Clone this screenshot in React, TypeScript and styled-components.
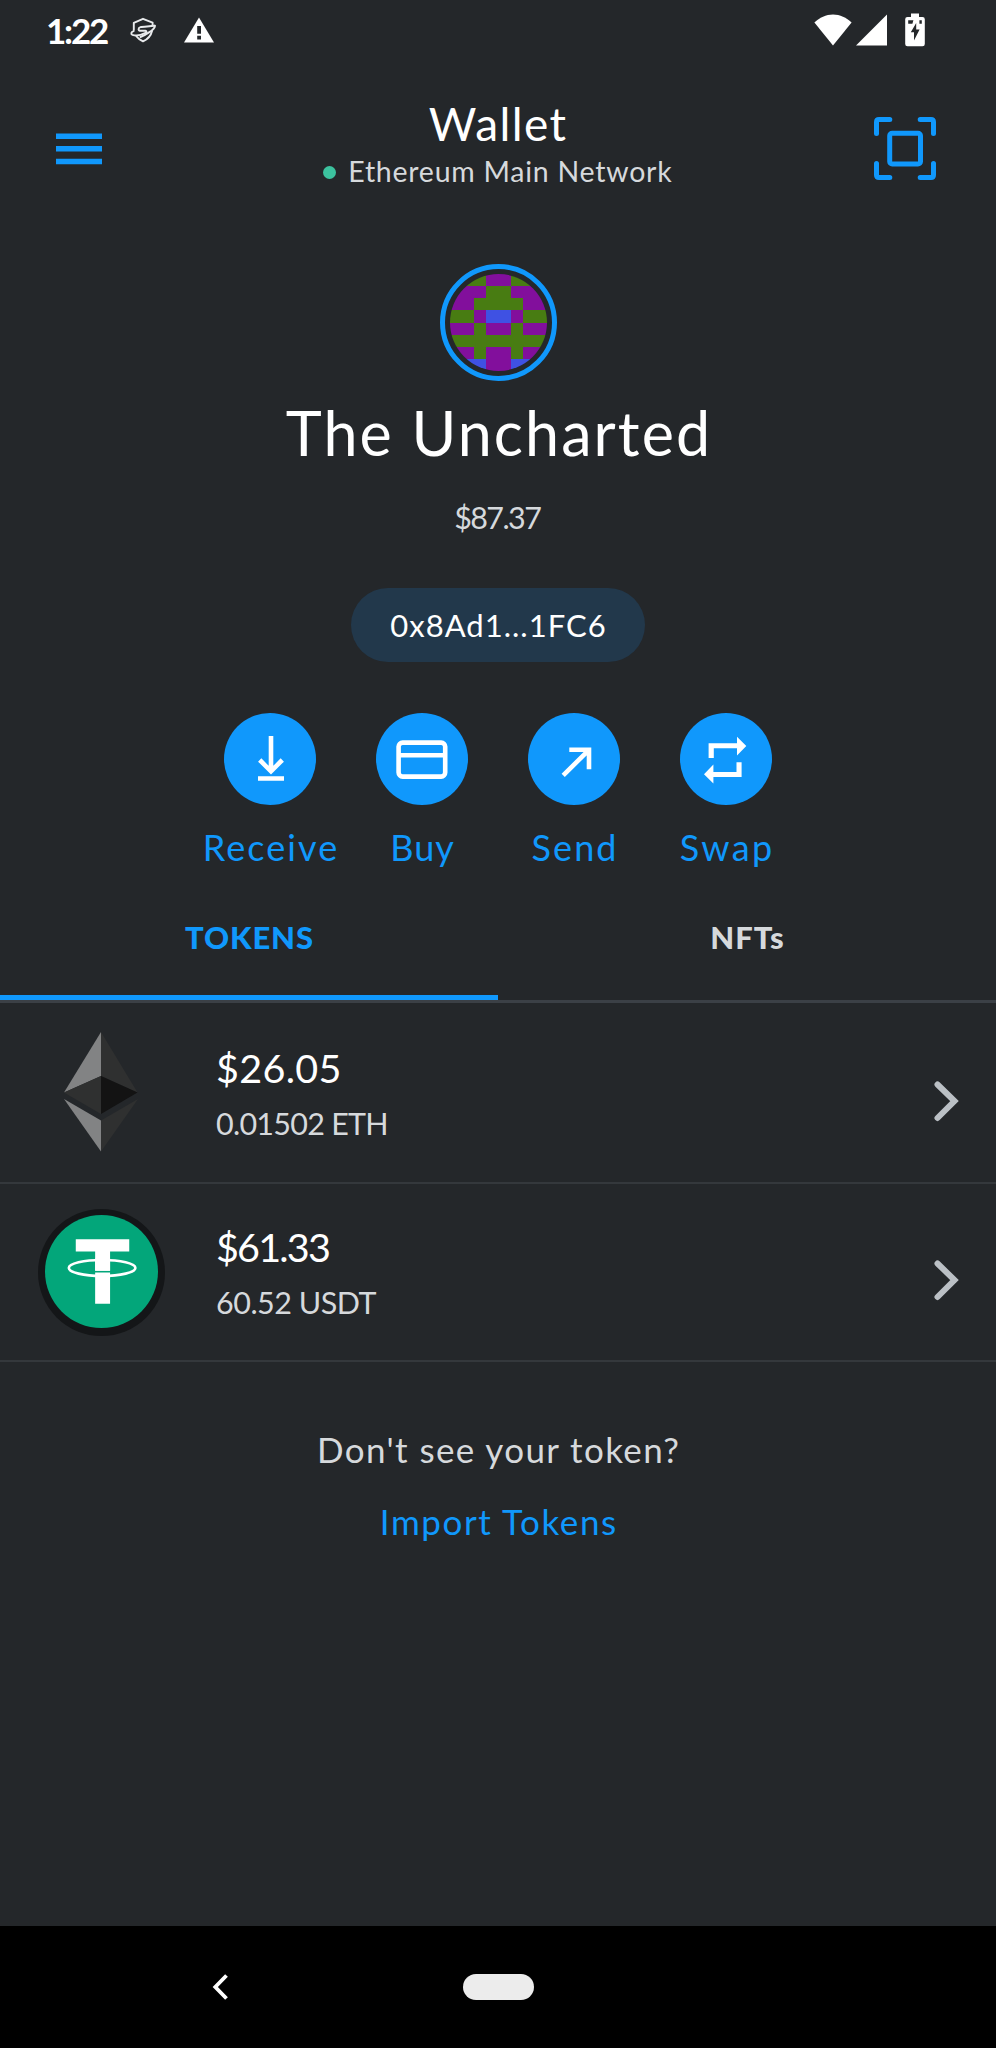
import React from 'react';
import styled, { createGlobalStyle, css } from 'styled-components';

const color = {
  bg: '#24272a',
  blue: '#1098fc',
  text: '#ffffff',
  muted: '#d6d9dc',
  line: '#3b4046',
  rowLine: '#34383c',
};

const GlobalStyle = createGlobalStyle`
  *, *::before, *::after { box-sizing: border-box; }
  body {
    margin: 0;
    background: ${color.bg};
    color: ${color.text};
    font-family: Lato, "Liberation Sans", sans-serif;
  }
  button { border: 0; padding: 0; background: none; color: inherit; font: inherit; }
  svg { display: block; flex: none; }
`;

/* Trailing tracking is pulled back so that centred lines stay centred. */
const type = (size: number, line: number, tracking = 0) => css`
  font-size: ${size}px;
  line-height: ${line}px;
  letter-spacing: ${tracking}px;
  margin-right: ${-tracking}px;
  white-space: nowrap;
`;

const Screen = styled.div`
  display: flex;
  flex-direction: column;
  width: 996px;
  height: 2048px;
  background: ${color.bg};
`;

const StatusBar = styled.div`
  display: flex;
  justify-content: space-between;
  height: 59px;
  padding: 1px 71px 0 46px;
`;

const StatusGroup = styled.div<{ $gap: number }>`
  display: flex;
  align-items: center;
  gap: ${(p) => p.$gap}px;
`;

const Clock = styled.span`
  ${type(35, 58, -2.2)}
  font-weight: 700;
  width: 62px;
  margin-right: 0;
`;

const Header = styled.header`
  display: grid;
  grid-template-columns: 1fr auto 1fr;
  height: 179px;
  padding: 0 60px 0 56px;
`;

const IconButton = styled.button<{ $end?: boolean }>`
  display: flex;
  align-items: center;
  justify-self: ${(p) => (p.$end ? 'end' : 'start')};
`;

const TitleBlock = styled.div`
  display: flex;
  flex-direction: column;
  align-items: center;
  gap: 2px;
  padding: 38px 0 0 3px;
`;

const Title = styled.h1`
  ${type(46, 54, 1.4)}
  margin-top: 0;
  margin-bottom: 0;
  font-weight: 400;
`;

const Network = styled.div`
  display: flex;
  align-items: center;
  gap: 12px;
  color: ${color.muted};
`;

const NetworkDot = styled.i`
  width: 13px;
  height: 13px;
  margin-top: 3px;
  border-radius: 50%;
  background: #3cc29e;
`;

const NetworkName = styled.span`
  ${type(28.5, 36, 0.75)}
`;

const Account = styled.section`
  display: flex;
  flex-direction: column;
  align-items: center;
  height: 475px;
  padding-top: 26px;
`;

const AvatarRing = styled.div`
  display: flex;
  align-items: center;
  justify-content: center;
  width: 117px;
  height: 117px;
  border: 5.5px solid ${color.blue};
  border-radius: 50%;
`;

const AccountName = styled.h2`
  ${type(61, 72, 2.1)}
  margin-top: 16px;
  margin-bottom: 0;
  font-weight: 400;
`;

const Balance = styled.div`
  ${type(30.5, 36, -1.6)}
  margin-top: 30px;
  color: ${color.muted};
`;

const AddressPill = styled.button`
  display: flex;
  align-items: center;
  justify-content: center;
  width: 294px;
  height: 74px;
  margin-top: 53px;
  border-radius: 37px;
  background: #22384b;
`;

const Address = styled.span`
  ${type(31, 38, 1)}
`;

const Actions = styled.nav`
  display: grid;
  grid-template-columns: repeat(4, 152px);
  justify-content: center;
  height: 156px;
`;

const Action = styled.button`
  display: flex;
  flex-direction: column;
  align-items: center;
  gap: 20px;
  color: ${color.blue};
`;

const ActionDisc = styled.span`
  display: flex;
  align-items: center;
  justify-content: center;
  width: 92px;
  height: 92px;
  border-radius: 50%;
  background: ${color.blue};
`;

const ActionLabel = styled.span<{ $tracking: number }>`
  ${(p) => type(36, 44, p.$tracking)}
`;

const Tabs = styled.div`
  display: grid;
  grid-template-columns: 1fr 1fr;
  height: 134px;
  border-bottom: 3px solid ${color.line};
`;

const Tab = styled.button<{ $active?: boolean }>`
  display: flex;
  justify-content: center;
  padding-top: 49px;
  border-bottom: 5px solid ${(p) => (p.$active ? color.blue : 'transparent')};
  color: ${(p) => (p.$active ? color.blue : color.muted)};
`;

const TabLabel = styled.span<{ $tracking: number }>`
  ${(p) => type(31, 38, p.$tracking)}
  font-weight: 900;
`;

const TokenList = styled.div`
  display: flex;
  flex-direction: column;
  padding-top: 2px;
`;

const TokenRow = styled.div`
  display: flex;
  height: 179px;
  padding: 25px 37px 0 38px;
  border-bottom: 2px solid ${color.rowLine};

  &:last-child { height: 177.5px; }
`;

const TokenIcon = styled.div<{ $badge?: boolean }>`
  display: flex;
  align-items: center;
  justify-content: center;
  width: 127px;
  height: 127px;
  padding: 0 1px 2px 0;
  margin-top: ${(p) => (p.$badge ? 0 : -1)}px;
  border-radius: 50%;
  background: ${(p) => (p.$badge ? '#141618' : 'transparent')};
`;

const TokenText = styled.div`
  display: flex;
  flex: 1;
  flex-direction: column;
  align-items: flex-start;
  gap: 12px;
  padding: 14px 0 0 51px;
`;

const Fiat = styled.span<{ $tracking: number }>`
  ${(p) => type(39.5, 48, p.$tracking)}
`;

const Amount = styled.span<{ $tracking: number }>`
  ${(p) => type(30.5, 38, p.$tracking)}
  color: ${color.muted};
`;

const RowChevron = styled.svg`
  margin-top: 50px;
`;

const ImportBlock = styled.div`
  display: flex;
  flex: 1;
  flex-direction: column;
  align-items: center;
  gap: 28px;
  padding-top: 65.5px;
`;

const ImportHint = styled.span`
  ${type(35, 44, 1.4)}
  color: ${color.muted};
`;

const ImportLink = styled.button`
  ${type(35, 44, 1.6)}
  color: ${color.blue};
`;

const NavBar = styled.footer`
  display: grid;
  grid-template-columns: 1fr 71px 1fr;
  align-items: center;
  height: 122px;
  background: #000;
`;

const BackButton = styled.button`
  justify-self: start;
  margin-left: 211px;
`;

const HomePill = styled.i`
  height: 26px;
  border-radius: 13px;
  background: #ececec;
`;

const ShieldIcon = () => (
  <svg width="28" height="28" viewBox="0 0 28 28" fill="none" stroke="#e8eaec" strokeWidth="1.9" strokeLinejoin="round" strokeLinecap="round">
    <path d="M4.800 14V6.800L14 2.800 23.600 6.600V9" />
    <path d="M23 15C22 19.600 18.800 23.200 14 25.400 11 24 9 22.400 7.400 20.200" />
    <path d="M25.800 9.800C20 10.600 14 10.400 11.400 11.200 8.800 12 9 14.800 11.800 14.800H16.400C18 14.800 17.600 16.400 16 17.200 11.600 19.400 6.400 20 3.400 18.800 1.600 18 2 16 4.600 15.200" />
    <path d="M25.800 9.800C26.200 12 23.400 14.200 20 16.400 17.400 18.200 14.600 19.800 11.400 21" />
  </svg>
);

const WarningIcon = () => (
  <svg width="30" height="26" viewBox="0 0 30 26">
    <path d="M15 0.5 30 25.5H0Z" fill="#fff" />
    <path d="M13.2 9h3.8v7.8h-3.8zM13.2 18.8h3.8v3.6h-3.8z" fill={color.bg} />
  </svg>
);

const WifiIcon = () => (
  <svg width="38" height="32" viewBox="0 0 38 32" fill="#fff">
    <path d="M19 31.6 0.4 8.6C5.6 3.6 12 0.5 19 0.5S32.4 3.6 37.6 8.6Z" />
  </svg>
);

const SignalIcon = () => (
  <svg width="31" height="32" viewBox="0 0 31 32" fill="#fff">
    <path d="M31 0.5V31.5H0Z" />
  </svg>
);

const BatteryIcon = () => (
  <svg width="20" height="34" viewBox="0 0 20 34">
    <path d="M6 0.5H14V4H17.5Q19.8 4 19.8 6.3V31Q19.8 33.3 17.5 33.3H2.5Q0.2 33.3 0.2 31V6.3Q0.2 4 2.5 4H6Z" fill="#fff" />
    <path d="M3.2 7.3H8.4L7.4 10.8H3.2ZM14.4 7.3H16.8V10.8H14.4Z" fill={color.bg} />
    <path d="M11.2 10 5.8 19.3H9V27.6L14.6 16.6H11.2Z" fill={color.bg} />
  </svg>
);

const MenuIcon = () => (
  <svg width="46" height="32" viewBox="0 0 46 32" fill={color.blue}>
    <path d="M0 0.5H46V6H0ZM0 13H46V18.5H0ZM0 25.8H46V31.3H0Z" />
  </svg>
);

const ScanIcon = () => (
  <svg width="62" height="63" viewBox="0 0 62 63" fill="none" stroke={color.blue} strokeWidth="5" strokeLinecap="round" strokeLinejoin="round">
    <path d="M2.5 16.5V5Q2.5 2.5 5 2.5H15.8M46.2 2.5H57Q59.5 2.5 59.5 5V16.5M59.5 46.5V58Q59.5 60.500 57 60.5H46.2M15.8 60.5H5Q2.5 60.5 2.5 58V46.5" />
    <rect x="15.7" y="16.3" width="30.8" height="30.6" rx="2.5" />
  </svg>
);

const avatarCells = [
  'GGGPPGGG',
  'PPPGGPPP',
  'PPGGGGPP',
  'GGPBBPGG',
  'PPGPPGPP',
  'GGGGGGGG',
  'PPGPPGPP',
  'BBBPPBBB',
];
const cellFill: Record<string, string> = { G: '#487c12', P: '#820f9c', B: '#3f51e3' };

const Avatar = () => (
  <svg width="97" height="97" viewBox="0 0 8 8" shapeRendering="crispEdges">
    <defs>
      <clipPath id="avatar-clip"><circle cx="4" cy="4" r="4" /></clipPath>
    </defs>
    <g clipPath="url(#avatar-clip)">
      {avatarCells.map((row, y) =>
        row.split('').map((cell, x) => (
          <rect key={`${x}-${y}`} x={x} y={y} width="1" height="1" fill={cellFill[cell]} />
        )),
      )}
    </g>
  </svg>
);

const ReceiveIcon = () => (
  <svg width="92" height="92" viewBox="0 0 92 92" fill="none" stroke="#fff" strokeWidth="4.6">
    <path d="M47 23V58M35.7 47 47 58.3 58.3 47M34 65.5H60" />
  </svg>
);

const BuyIcon = () => (
  <svg width="92" height="92" viewBox="0 0 92 92" fill="none" stroke="#fff" strokeWidth="4.6">
    <rect x="22.6" y="29.6" width="46.6" height="34" rx="4" />
    <path d="M22.6 42.2H69.2" />
  </svg>
);

const SendIcon = () => (
  <svg width="92" height="92" viewBox="0 0 92 92" fill="none" stroke="#fff" strokeWidth="4.6">
    <path d="M41.3 36.8H61V56.3M61 36.8 35.2 62.4" />
  </svg>
);

const SwapIcon = () => (
  <svg width="92" height="92" viewBox="0 0 92 92" fill="#fff">
    <path d="M28.6 45V30.2H57V23.7L66.3 33 57 42.6V35.3H33.8V45Z" />
    <path d="M61.6 49.3V64H33.4V70.6L24 61.3 33.4 51.6V58.9H56.5V49.3Z" />
  </svg>
);

const EthereumIcon = () => (
  <svg width="74" height="120" viewBox="0 0 74 120">
    <path d="M37 0 0 60.5 37 44Z" fill="#828384" />
    <path d="M37 0 73.5 60.5 37 44Z" fill="#2f3030" />
    <path d="M37 44 0 60.5 37 82Z" fill="#2f3030" />
    <path d="M37 44 73.5 60.5 37 82Z" fill="#131313" />
    <path d="M0 67 37 88.5V119.5Z" fill="#828384" />
    <path d="M74 67 37 88.5V119.5Z" fill="#2f3030" />
  </svg>
);

const TetherIcon = () => (
  <svg width="113" height="113" viewBox="0 0 112 112">
    <circle cx="56" cy="56" r="56" fill="#03a67a" />
    <path d="M30.5 24H83.5V36.3H64.5V55.2H49.7V36.3H30.5Z" fill="#fff" />
    <ellipse cx="56.6" cy="52.5" rx="33" ry="7.9" fill="none" stroke="#fff" strokeWidth="2.6" />
    <path d="M49.7 43H64.5V55.2H49.7ZM49.7 57H64.5V88H49.7Z" fill="#fff" />
  </svg>
);

const Chevron = () => (
  <RowChevron width="26" height="42" viewBox="0 0 26 42" fill="none" stroke="#bbc0c5" strokeWidth="6" strokeLinecap="round" strokeLinejoin="miter">
    <path d="M4.500 4.500 21.500 21 4.500 38" />
  </RowChevron>
);

const BackIcon = () => (
  <svg width="18" height="28" viewBox="0 0 18 28" fill="none" stroke="#fff" strokeWidth="3.8">
    <path d="M15.5 2.5 4.3 14 15.5 25.5" />
  </svg>
);

const actions = [
  { label: 'Receive', icon: <ReceiveIcon />, tracking: 2.1 },
  { label: 'Buy', icon: <BuyIcon />, tracking: 1 },
  { label: 'Send', icon: <SendIcon />, tracking: 2.1 },
  { label: 'Swap', icon: <SwapIcon />, tracking: 2.4 },
];

const tokens = [
  { fiat: '$26.05', amount: '0.01502 ETH', icon: <EthereumIcon />, badge: false, fiatTracking: 0.3, amountTracking: -0.75 },
  { fiat: '$61.33', amount: '60.52 USDT', icon: <TetherIcon />, badge: true, fiatTracking: -1.8, amountTracking: -0.5 },
];

export default function App() {
  return (
    <>
      <GlobalStyle />
      <Screen>
        <StatusBar>
          <StatusGroup $gap={21}>
            <Clock>1:22</Clock>
            <StatusGroup $gap={27}>
              <ShieldIcon />
              <WarningIcon />
            </StatusGroup>
          </StatusGroup>
          <StatusGroup $gap={18}>
            <StatusGroup $gap={4}>
              <WifiIcon />
              <SignalIcon />
            </StatusGroup>
            <BatteryIcon />
          </StatusGroup>
        </StatusBar>

        <Header>
          <IconButton aria-label="Menu"><MenuIcon /></IconButton>
          <TitleBlock>
            <Title>Wallet</Title>
            <Network>
              <NetworkDot />
              <NetworkName>Ethereum Main Network</NetworkName>
            </Network>
          </TitleBlock>
          <IconButton $end aria-label="Scan"><ScanIcon /></IconButton>
        </Header>

        <Account>
          <AvatarRing><Avatar /></AvatarRing>
          <AccountName>The Uncharted</AccountName>
          <Balance>$87.37</Balance>
          <AddressPill><Address>0x8Ad1...1FC6</Address></AddressPill>
        </Account>

        <Actions>
          {actions.map((a) => (
            <Action key={a.label}>
              <ActionDisc>{a.icon}</ActionDisc>
              <ActionLabel $tracking={a.tracking}>{a.label}</ActionLabel>
            </Action>
          ))}
        </Actions>

        <Tabs>
          <Tab $active><TabLabel $tracking={0.9}>TOKENS</TabLabel></Tab>
          <Tab><TabLabel $tracking={0.9}>NFTs</TabLabel></Tab>
        </Tabs>

        <TokenList>
          {tokens.map((t) => (
            <TokenRow key={t.amount}>
              <TokenIcon $badge={t.badge}>{t.icon}</TokenIcon>
              <TokenText>
                <Fiat $tracking={t.fiatTracking}>{t.fiat}</Fiat>
                <Amount $tracking={t.amountTracking}>{t.amount}</Amount>
              </TokenText>
              <Chevron />
            </TokenRow>
          ))}
        </TokenList>

        <ImportBlock>
          <ImportHint>Don't see your token?</ImportHint>
          <ImportLink>Import Tokens</ImportLink>
        </ImportBlock>

        <NavBar>
          <BackButton aria-label="Back"><BackIcon /></BackButton>
          <HomePill />
        </NavBar>
      </Screen>
    </>
  );
}
